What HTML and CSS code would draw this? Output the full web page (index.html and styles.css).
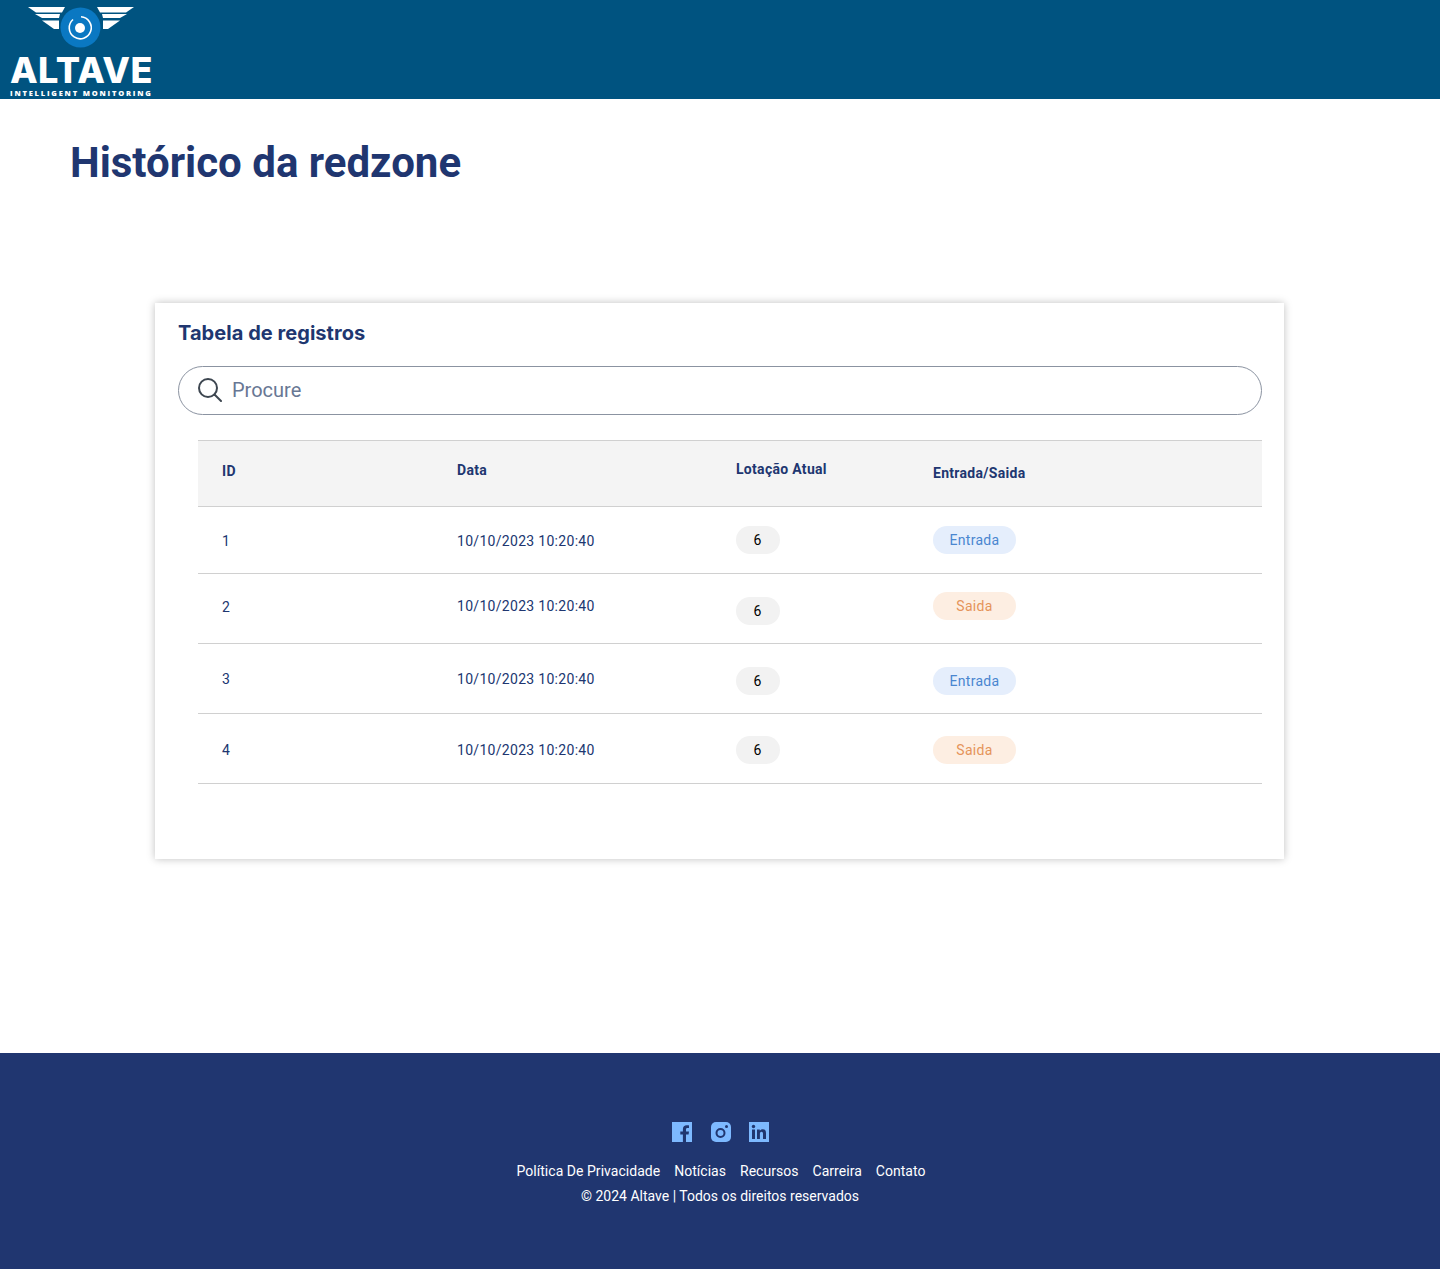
FILE: index.html
```html
<!DOCTYPE html>
<html lang="pt-BR">
<head>
    <meta charset="UTF-8">
    <meta name="viewport" content="width=device-width, initial-scale=1.0">
    <link rel="stylesheet" href="styles.css">
    <title>Histórico da redzone</title>
</head>
<body>
    <header class="topbar">
        <div class="logo">
            <svg class="logo-mark" width="142" height="50" viewBox="0 0 142 50">
                <g fill="#fff">
                    <polygon points="18,7 55,7 52,12.500 26,12.500"/>
                    <polygon points="25,14 50,14 49,18 32,18"/>
                    <polygon points="32,20.500 49,20.500 49,29 44,29"/>
                    <polygon points="124,7 87,7 90,12.500 116,12.500"/>
                    <polygon points="117,14 92,14 93,18 110,18"/>
                    <polygon points="110,20.500 93,20.500 93,29 98,29"/>
                </g>
                <circle cx="70.500" cy="27.500" r="20" fill="#0a78c2"/>
                <path d="M63 19.500 A11 11 0 1 0 71 16.800" fill="none" stroke="#fff" stroke-width="1.600"/>
                <circle cx="70" cy="28" r="5" fill="#fff"/>
            </svg>
            <div class="logo-name">ALTAVE</div>
            <div class="logo-tag">INTELLIGENT MONITORING</div>
        </div>
    </header>

    <main class="content">
        <h1 class="page-title">Histórico da redzone</h1>

        <section class="card">
            <h2 class="card-title">Tabela de registros</h2>

            <div class="search">
                <svg class="search-icon" width="24" height="24" viewBox="0 0 24 24" fill="none" stroke="#3d4650" stroke-width="2">
                    <circle cx="10" cy="10" r="9"/>
                    <path d="M16.500 16.500l6.500 6.500" stroke-linecap="round"/>
                </svg>
                <span class="search-text">Procure</span>
            </div>

            <div class="records">
                <div class="row row-head">
                    <div class="cell-id down-1">ID</div>
                    <div>Data</div>
                    <div class="up-1">Lotação Atual</div>
                    <div class="down-3">Entrada/Saida</div>
                </div>
                <div class="row row-first">
                    <div class="cell-id down-1">1</div>
                    <div class="down-1">10/10/2023 10:20:40</div>
                    <div><span class="count">6</span></div>
                    <div><span class="badge badge-in">Entrada</span></div>
                </div>
                <div class="row">
                    <div class="cell-id up-2">2</div>
                    <div class="up-3">10/10/2023 10:20:40</div>
                    <div class="down-2"><span class="count">6</span></div>
                    <div class="up-3"><span class="badge badge-out">Saida</span></div>
                </div>
                <div class="row">
                    <div class="cell-id">3</div>
                    <div>10/10/2023 10:20:40</div>
                    <div class="down-2"><span class="count">6</span></div>
                    <div class="down-2"><span class="badge badge-in">Entrada</span></div>
                </div>
                <div class="row">
                    <div class="cell-id down-1">4</div>
                    <div class="down-1">10/10/2023 10:20:40</div>
                    <div class="down-1"><span class="count">6</span></div>
                    <div class="down-1"><span class="badge badge-out">Saida</span></div>
                </div>
            </div>
        </section>
    </main>

    <footer class="footer">
        <div class="social">
            <svg width="20" height="20" viewBox="0 0 20 20">
                <path fill="#7db9ff" d="M0 0h20v20h-6v-7.500h2.600l.4-3h-3V7.600c0-.9.3-1.500 1.500-1.500H17V3.400c-.3 0-1.200-.1-2.300-.1-2.300 0-3.800 1.400-3.800 3.900v2.300H8.300v3h2.600V20H0z"/>
            </svg>
            <svg width="20" height="20" viewBox="0 0 20 20">
                <rect width="20" height="20" rx="5" fill="#7db9ff"/>
                <circle cx="9.500" cy="11" r="4" fill="none" stroke="#203670" stroke-width="2"/>
                <circle cx="15.500" cy="4.500" r="1.500" fill="#203670"/>
            </svg>
            <svg width="20" height="20" viewBox="0 0 20 20">
                <rect width="20" height="20" fill="#7db9ff"/>
                <g fill="#203670">
                    <rect x="3" y="7.500" width="3" height="9.500"/>
                    <circle cx="4.500" cy="4.500" r="1.700"/>
                    <path d="M8 7.500h2.800v1.300c.5-.9 1.600-1.500 3-1.500 2.500 0 3.200 1.600 3.200 4V17h-3v-5c0-1.200-.3-2.200-1.500-2.200s-1.600 1-1.600 2.200v5H8z"/>
                </g>
            </svg>
        </div>
        <nav class="footer-links">
            <a href="#">Política De Privacidade</a>
            <a href="#">Notícias</a>
            <a href="#">Recursos</a>
            <a href="#">Carreira</a>
            <a href="#">Contato</a>
        </nav>
        <p class="copyright">© 2024 Altave | Todos os direitos reservados</p>
    </footer>
</body>
</html>
```

FILE: styles.css
```css
* {
    box-sizing: border-box;
}

body {
    margin: 0;
    min-height: 100vh;
    display: flex;
    flex-direction: column;
    font-family: Roboto, "Liberation Sans", sans-serif;
    color: #203670;
    background: #fff;
}

.topbar {
    height: 99px;
    padding-left: 10px;
    background: #005380;
}

.logo {
    width: 142px;
    color: #fff;
}

.logo-mark {
    display: block;
}

.logo-name {
    margin-top: 7px;
    font-family: Inter, sans-serif;
    font-size: 36px;
    font-weight: 800;
    line-height: 26px;
    letter-spacing: 0.4px;
    white-space: nowrap;
}

.logo-tag {
    margin-top: 6px;
    font-family: "Open Sans", sans-serif;
    font-size: 7.500px;
    font-weight: 800;
    line-height: 9px;
    letter-spacing: 1.800px;
    white-space: nowrap;
}

.content {
    flex: 1;
    padding: 37px 156px 0 155px;
}

.page-title {
    margin: 0 0 114px -85px;
    font-size: 42px;
    font-weight: 700;
    line-height: 53px;
}

.card {
    height: 556px;
    padding: 17px 22px 0 23px;
    background: #fff;
    box-shadow: 0 0 8px rgba(0, 0, 0, 0.25);
}

.card-title {
    margin: 0 0 20px;
    font-family: Inter, sans-serif;
    font-size: 20px;
    font-weight: 700;
    line-height: 26px;
    letter-spacing: 0.05px;
}

.search {
    display: flex;
    align-items: center;
    gap: 10px;
    height: 49px;
    padding: 0 0 2px 19px;
    border: 1px solid #8b93a1;
    border-radius: 25px;
}

.search-text {
    font-size: 20px;
    color: #687794;
}

.records {
    margin: 25px 0 0 20px;
}

.row {
    display: grid;
    grid-template-columns: 259px 279px 197px 1fr;
    align-items: center;
    height: 70px;
    font-size: 14px;
    letter-spacing: 0.3px;
    border-bottom: 1px solid #d0d0d0;
}

.row-head {
    height: 67px;
    padding-bottom: 8px;
    font-weight: 700;
    background: #f4f4f4;
    border-top: 1px solid #d0d0d0;
}

.row-first {
    height: 67px;
}

.cell-id {
    padding-left: 24px;
}

/* the rows in the design are not quite centred */
.up-1 {
    margin-bottom: 2px;
}

.up-2 {
    margin-bottom: 4px;
}

.up-3 {
    margin-bottom: 6px;
}

.down-1 {
    margin-top: 2px;
}

.down-2 {
    margin-top: 4px;
}

.down-3 {
    margin-top: 6px;
}

.count,
.badge {
    display: flex;
    align-items: center;
    justify-content: center;
    height: 28px;
    border-radius: 14px;
}

.count {
    width: 44px;
    padding-right: 1px;
    color: #000;
    background: #f2f2f2;
}

.badge {
    width: 83px;
}

.badge-in {
    color: #4a86d0;
    background: #e5eefc;
}

.badge-out {
    color: #e5945a;
    background: #fdeee2;
}

.footer {
    height: 216px;
    padding-top: 69px;
    text-align: center;
    font-size: 14px;
    color: #fff;
    background: #203670;
}

.social {
    display: flex;
    justify-content: center;
    gap: 18.500px;
    margin-left: 1px;
}

.footer-links {
    display: flex;
    justify-content: center;
    gap: 14px;
    margin: 20px 0 0 2px;
    line-height: 18px;
    letter-spacing: 0.03px;
}

.footer-links a {
    color: #fff;
    text-decoration: none;
}

.copyright {
    margin: 7px 0 0;
    line-height: 18px;
}
```
